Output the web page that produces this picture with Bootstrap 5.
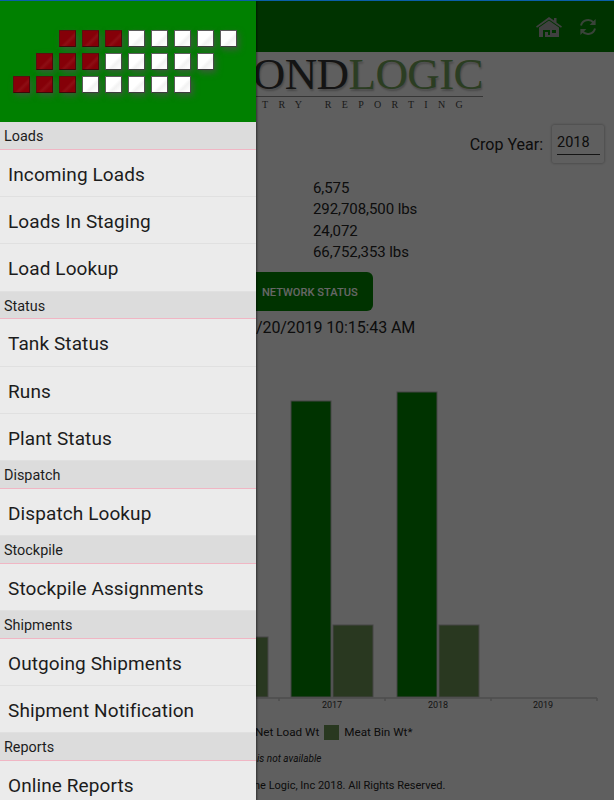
<!DOCTYPE html>
<html lang="en">
<head>
  <meta charset="UTF-8">
  <meta name="viewport" content="width=device-width, initial-scale=1.0">
  <title>Industry Reporting</title>
  <link href="https://cdn.jsdelivr.net/npm/bootstrap@5.3.0/dist/css/bootstrap.min.css" rel="stylesheet">
  <style>
    html, body { height: 800px; overflow: hidden; }
    body { font-family: Roboto, "Liberation Sans", sans-serif; background: #eeeeee; color: #222; }
    .app-frame { position: relative; width: 614px; height: 800px; overflow: hidden; border-top: 1px solid #0a5fa8; }

    /* page behind the drawer */
    .top-bar { height: 51px; background: #008000; padding-right: 17px; gap: 17px; }
    .logo-block { width: 227px; margin-left: 256px; padding-top: 1px; }
    .logo-word { font-family: "Liberation Serif", serif; font-size: 45px; line-height: 43px; white-space: nowrap; letter-spacing: -.6px; color: #333; text-shadow: 1px 2px 2px rgba(0,0,0,.25); direction: rtl; text-align: left; }
    .logo-word b { font-weight: 400; color: #6b9a55; }
    .logo-tag { font-family: "Liberation Serif", serif; font-size: 10px; line-height: 13px; letter-spacing: 10.3px; border-top: 1px solid #888; color: #444; white-space: nowrap; padding: 1px 0 0 6px; }
    .crop-row { height: 38px; margin-top: 14px; padding-right: 10px; gap: 9px; font-size: 16px; }
    .crop-row > span { padding-top: 1px; }
    .crop-box { width: 52px; height: 38px; padding: 8px 4px 0 5px; box-shadow: 0 0 3px rgba(0,0,0,.4); border-radius: 2px; background: #eee; font-size: 14.5px; line-height: 20px; }
    .crop-box span { display: block; height: 22px; border-bottom: 1px solid #333; }
    .stat-lines { margin: 14.5px 0 0 313px; font-size: 15px; line-height: 21px; letter-spacing: -.07px; }
    .stat-lines p { margin: 0 0 1px; }
    .net-btn { width: 117px; height: 39px; margin: 9.5px 0 0 256px; background: #008000; border-radius: 0 6px 6px 0; color: #fff; font-size: 11.1px; font-weight: 500; padding: 3px 0 0 6px; border: 0; text-align: left; }
    .stamp { margin: 7px 0 0 256px; font-size: 16px; line-height: 20px; letter-spacing: -.1px; white-space: nowrap; }
    .chart-box { display: block; margin-top: 42px; }
    .legend-row { margin: 9px 0 0 255px; height: 17px; gap: 5px; font-size: 11.7px; }
    .legend-swatch { width: 15px; height: 15px; background: #688c50; }
    .note-line { margin: 11px 0 0 257px; font-size: 10px; font-style: italic; line-height: 14px; }
    .copy-line { margin: 13px 0 0 254px; font-size: 11px; line-height: 14px; white-space: nowrap; }

    /* scrim and drawer */
    .scrim-layer { position: absolute; inset: 0; background: rgba(0,0,0,.6); }
    .side-drawer { position: absolute; top: 0; left: 0; width: 256px; height: 800px; overflow: hidden; background: #ebebeb; box-shadow: 1px 0 2px rgba(0,0,0,.5); }
    .drawer-head { height: 121px; background: #008000; padding-top: 29px; gap: 6px; }
    .sq-row { display: flex; gap: 6px; }
    .sq-r, .sq-w { flex: 0 0 17px; height: 17px; border: 1px solid; border-color: #5c5c5c #4a4a4a #3c3c3c #5c5c5c; box-shadow: 2px 3px 6px rgba(80,80,80,.7); }
    .sq-r { border-color: #5a1010 #4a0a0a #3c0808 #5a1010; background: linear-gradient(135deg, #850008 50%, #8e0e14 62%, #850008 78%); }
    .sq-w { background: linear-gradient(135deg, #ffffff 50%, #f2f2f2 65%, #fbfbfb 85%); }
    .side-drawer .list-group-item { background: #ebebeb; color: #1c1c1c; border-color: #e0e0e0; }
    .side-drawer .sec-label { height: 27.75px; padding: 0 0 0 4px; background: #dcdcdc; font-size: 14.4px; line-height: 30px; border-bottom: 1px solid #f0b6c4; }
    .side-drawer .nav-entry { height: 47.25px; padding: 0 0 0 8px; font-size: 19px; line-height: 49px; letter-spacing: .1px; }
  </style>
</head>
<body>
  <div class="app-frame">
    <div class="top-bar d-flex align-items-center justify-content-end">
      <svg width="26" height="22" viewBox="0 0 26 22" fill="#a0a0a0">
        <path d="M13 1 L18 4.6 V2 H20.5 V6.4 L26 10.5 L25 11.8 L13 3.4 L1 11.8 L0 10.5 Z"/>
        <path fill-rule="evenodd" d="M3 11.5 L13 4.6 L23 11.5 V21 H3 Z M7 14 V21 H9 V16 H12 V19 H14 V14 Z M16 14 V17 H20 V14 Z"/>
      </svg>
      <svg width="18" height="18" viewBox="0 0 18 18" fill="none" stroke="#8fa88f" stroke-width="2">
        <path d="M2 7.5 A7.3 7.3 0 0 1 14.5 4.5"/>
        <path d="M16 10.5 A7.3 7.3 0 0 1 3.5 13.5"/>
        <path d="M16.6 1 V7 H10.6 Z" fill="#8fa88f" stroke="none"/>
        <path d="M1.4 17 V11 H7.4 Z" fill="#8fa88f" stroke="none"/>
      </svg>
    </div>

    <div class="logo-block">
      <div class="logo-word"><span dir="ltr">OND<b>LOGIC</b></span></div>
      <div class="logo-tag">TRY REPORTING</div>
    </div>

    <div class="crop-row d-flex align-items-center justify-content-end">
      <span>Crop Year:</span>
      <div class="crop-box"><span>2018</span></div>
    </div>

    <div class="stat-lines">
      <p>6,575<br>292,708,500 lbs</p>
      <p>24,072<br>66,752,353 lbs</p>
    </div>

    <button class="net-btn btn d-block" type="button">NETWORK STATUS</button>
    <div class="stamp">/20/2019 10:15:43 AM</div>

    <svg class="chart-box" width="614" height="335" viewBox="0 0 614 335">
      <g stroke="#aaa">
        <rect x="291" y="21" width="40" height="296" fill="#008000"/>
        <rect x="333" y="245" width="40" height="72" fill="#688c50"/>
        <rect x="397" y="12" width="40" height="305" fill="#008000"/>
        <rect x="439" y="245" width="40" height="72" fill="#688c50"/>
        <rect x="228" y="257" width="40" height="60" fill="#688c50"/>
      </g>
      <path d="M256 318 H597 M279 318 v3 M385 318 v3 M491 318 v3 M597 318 v3" stroke="#c0c0c0" stroke-width="1.5" fill="none"/>
      <g font-family="Roboto, sans-serif" font-size="9" fill="#333" text-anchor="middle">
        <text x="332" y="328">2017</text>
        <text x="438" y="328">2018</text>
        <text x="543" y="328">2019</text>
      </g>
    </svg>

    <div class="legend-row d-flex align-items-center">
      <span>Net Load Wt</span>
      <span class="legend-swatch"></span>
      <span>Meat Bin Wt*</span>
    </div>
    <div class="note-line">is not available</div>
    <div class="copy-line">ne Logic, Inc 2018. All Rights Reserved.</div>

    <div class="scrim-layer"></div>

    <div class="side-drawer">
      <div class="drawer-head d-flex flex-column">
        <div class="sq-row" style="margin-left:59px"><i class="sq-r"></i><i class="sq-r"></i><i class="sq-r"></i><i class="sq-w"></i><i class="sq-w"></i><i class="sq-w"></i><i class="sq-w"></i><i class="sq-w"></i></div>
        <div class="sq-row" style="margin-left:36px"><i class="sq-r"></i><i class="sq-r"></i><i class="sq-r"></i><i class="sq-w"></i><i class="sq-w"></i><i class="sq-w"></i><i class="sq-w"></i><i class="sq-w"></i></div>
        <div class="sq-row" style="margin-left:13px"><i class="sq-r"></i><i class="sq-r"></i><i class="sq-r"></i><i class="sq-w"></i><i class="sq-w"></i><i class="sq-w"></i><i class="sq-w"></i><i class="sq-w"></i></div>
      </div>
      <div class="list-group list-group-flush">
        <div class="list-group-item sec-label">Loads</div>
        <a class="list-group-item nav-entry">Incoming Loads</a>
        <a class="list-group-item nav-entry">Loads In Staging</a>
        <a class="list-group-item nav-entry">Load Lookup</a>
        <div class="list-group-item sec-label">Status</div>
        <a class="list-group-item nav-entry">Tank Status</a>
        <a class="list-group-item nav-entry">Runs</a>
        <a class="list-group-item nav-entry">Plant Status</a>
        <div class="list-group-item sec-label">Dispatch</div>
        <a class="list-group-item nav-entry">Dispatch Lookup</a>
        <div class="list-group-item sec-label">Stockpile</div>
        <a class="list-group-item nav-entry">Stockpile Assignments</a>
        <div class="list-group-item sec-label">Shipments</div>
        <a class="list-group-item nav-entry">Outgoing Shipments</a>
        <a class="list-group-item nav-entry">Shipment Notification</a>
        <div class="list-group-item sec-label">Reports</div>
        <a class="list-group-item nav-entry">Online Reports</a>
      </div>
    </div>
  </div>
  <script src="https://cdn.jsdelivr.net/npm/bootstrap@5.3.0/dist/js/bootstrap.bundle.min.js"></script>
</body>
</html>
